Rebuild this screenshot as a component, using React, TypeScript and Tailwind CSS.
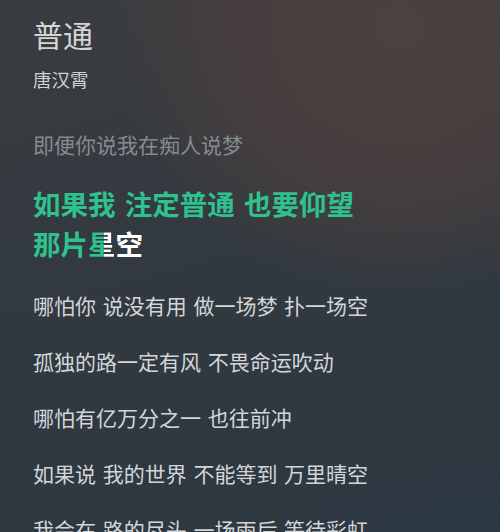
// Lyrics view — song title, artist, and the scrolling lyric list with
// the current line highlighted karaoke-style.
const lines = [
  "哪怕你 说没有用 做一场梦 扑一场空",
  "孤独的路一定有风 不畏命运吹动",
  "哪怕有亿万分之一 也往前冲",
  "如果说 我的世界 不能等到 万里晴空",
  "我会在 路的尽头 一场雨后 等待彩虹",
]

export default function App() {
  return (
    <div
      className="relative w-[500px] h-[532px] overflow-hidden bg-[radial-gradient(ellipse_75%_65%_at_80%_5%,#4b4141_0%,#463e3e_45%,transparent_78%),linear-gradient(165deg,#3a3d40_0%,#323940_45%,#2c3842_100%)]"
      style={{ fontFamily: '"Noto Sans CJK SC", "Noto Sans", sans-serif' }}
    >
      <div className="flex flex-col px-[33px]">
        <div className="mt-[14px] text-[30px] leading-[40px] text-[#d4d4d4]">普通</div>
        <div className="mt-[12px] text-[18.5px] leading-[26px] text-[#d0d1d2]">唐汉霄</div>
        <div className="mt-[37px] text-[21px] leading-[30px] text-[#868c91]">即便你说我在痴人说梦</div>

        <div className="mt-[24px] text-[27.5px] leading-[40px] font-bold text-[#2fc28f] [word-spacing:3px]">
          <div>如果我 注定普通 也要仰望</div>
          <div>
            那片
            <span className="bg-[linear-gradient(90deg,#2fc28f_0%,#2fc28f_57%,#ffffff_57%,#ffffff_100%)] bg-clip-text text-transparent">
              星
            </span>
            <span className="text-white">空</span>
          </div>
        </div>

        <div className="mt-[14px] flex flex-col">
          {lines.map((l) => (
            <div key={l} className="text-[21px] leading-[56px] whitespace-nowrap text-[#d3d6d8] [word-spacing:2px]">
              {l}
            </div>
          ))}
        </div>
      </div>
    </div>
  )
}
